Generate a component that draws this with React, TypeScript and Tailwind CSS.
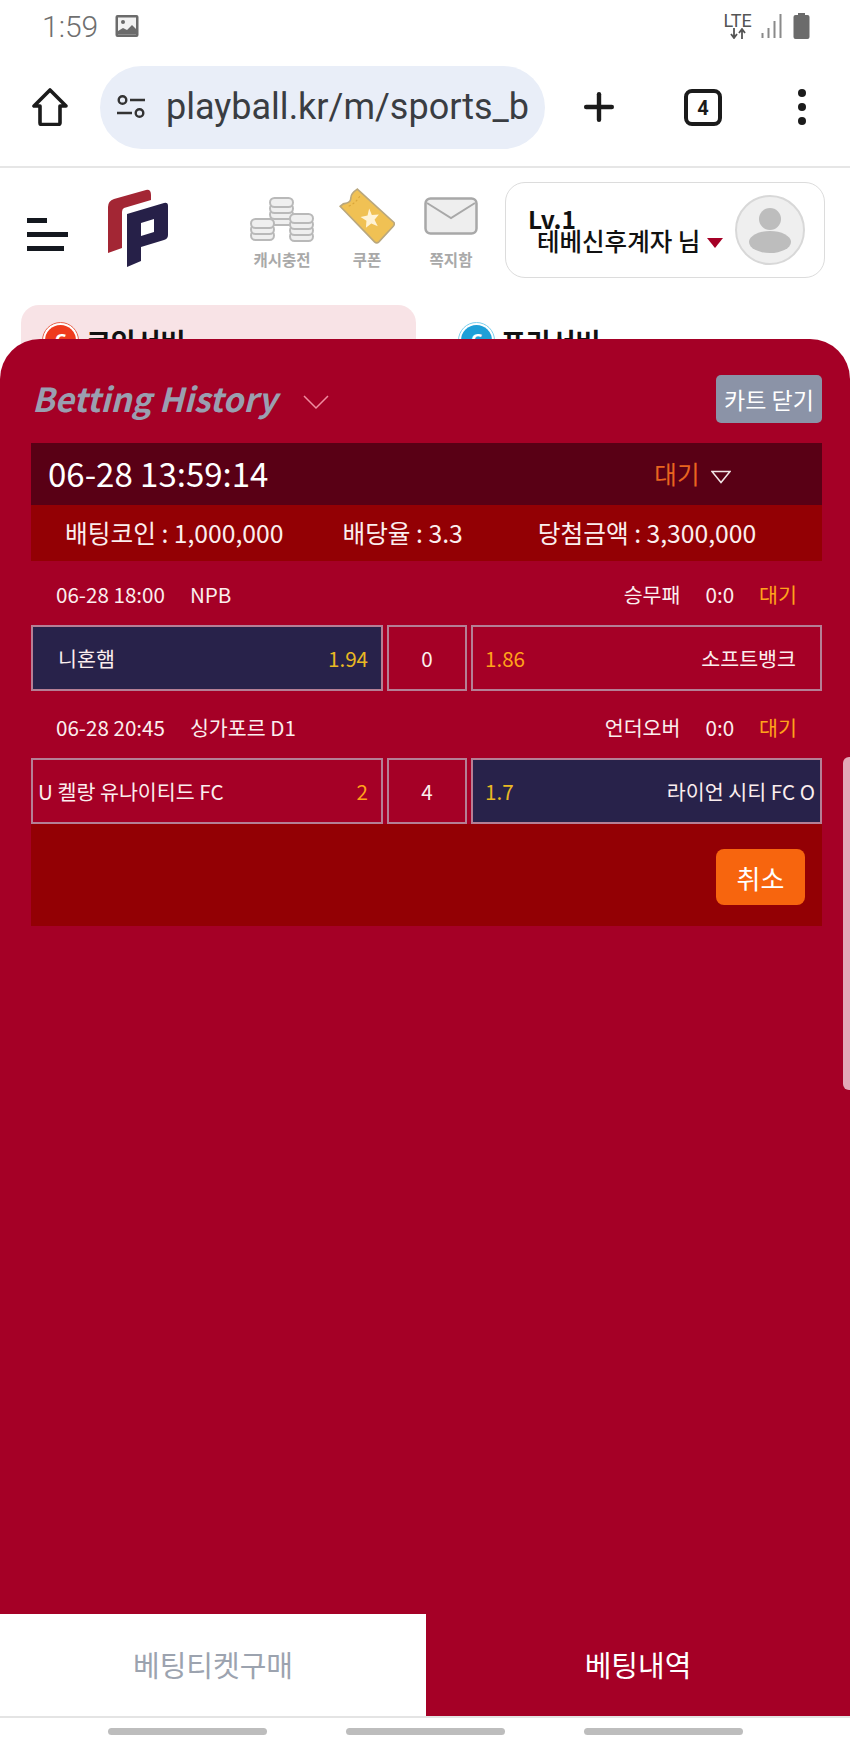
import { Plus } from "lucide-react";

const KR = "font-['Noto_Sans_CJK_KR','Noto_Sans',sans-serif]";

function StatusBar() {
  return (
    <div className="flex h-[52px] items-center justify-between pl-[42px] pr-[40px]">
      <div className="flex items-center gap-[17px]">
        <span className="font-['Roboto',sans-serif] text-[30px] font-light text-[#6f6f6f]">1:59</span>
        <svg width="24" height="24" viewBox="0 0 24 24">
          <rect x="0.5" y="1" width="23" height="22" rx="2" fill="#6b6b6b" />
          <rect x="3" y="3.5" width="18" height="17" fill="#f2f2f2" />
          <circle cx="8" cy="8" r="2" fill="#6b6b6b" />
          <path d="M3 20.5V17l5-3 4 2 5-5 4 4v5.5z" fill="#6b6b6b" />
        </svg>
      </div>
      <div className="flex items-center">
        <div className="flex w-[31px] flex-col items-center font-['Roboto',sans-serif] text-[18px] leading-[15px] text-[#555]">
          <span>LTE</span>
          <svg width="18" height="11" viewBox="0 0 18 11">
            <path d="M5 0v9M2 6l3 4 3-4M13 11V2M10 5l3-4 3 4" stroke="#555" strokeWidth="1.800" fill="none" />
          </svg>
        </div>
        <svg width="22" height="24" viewBox="0 0 22 24" className="ml-[8px]">
          <path d="M1.500 24v-5M7.500 24v-10M13.500 24V7M19.500 24V0" stroke="#8a8a8a" strokeWidth="2" />
        </svg>
        <svg width="17" height="26" viewBox="0 0 17 26" className="ml-[10px]">
          <path d="M5 2V0h7v2h2.500A2 2 0 0 1 16.500 4v20a2 2 0 0 1-2 2h-12a2 2 0 0 1-2-2V4a2 2 0 0 1 2-2z" fill="#6b6b6b" />
        </svg>
      </div>
    </div>
  );
}

function Toolbar() {
  return (
    <div className="flex h-[116px] items-center border-b-2 border-[#e6e6e6] pb-[4px]">
      <svg width="36" height="38" viewBox="0 0 36 38" className="ml-[32px] mr-[32px] shrink-0">
        <path d="M18 2 2 18h6v17a1.500 1.500 0 0 0 1.500 1.500h17A1.500 1.500 0 0 0 28 35V18h6z" fill="none" stroke="#1b1b1b" strokeWidth="3.600" strokeLinejoin="round" />
      </svg>
      <div className="flex h-[83px] w-[445px] shrink-0 items-center overflow-hidden rounded-[42px] bg-[#e9eef8] pl-[16px]">
        <svg width="32" height="26" viewBox="0 0 32 26" className="mr-[18px] shrink-0">
          <circle cx="6.500" cy="6" r="3.800" fill="none" stroke="#333" strokeWidth="2.400" />
          <path d="M14 6h15M1 19h15" stroke="#333" strokeWidth="2.600" />
          <circle cx="23.500" cy="19" r="3.800" fill="none" stroke="#333" strokeWidth="2.400" />
        </svg>
        <span className="whitespace-nowrap font-['Roboto',sans-serif] text-[36px] text-[#3a3d42]">playball.kr/m/sports_b</span>
      </div>
      <Plus size={44} strokeWidth={2.400} className="ml-[32px] text-[#1b1b1b]" />
      <div className="ml-[63px] mt-[1px] flex h-[37px] w-[38px] items-center justify-center rounded-[8px] border-4 border-[#1b1b1b] font-['Roboto',sans-serif] text-[20px] font-bold text-[#1b1b1b]">
        4
      </div>
      <div className="ml-[76px] flex flex-col gap-[6px]">
        <span className="h-[8px] w-[8px] rounded-full bg-[#1b1b1b]" />
        <span className="h-[8px] w-[8px] rounded-full bg-[#1b1b1b]" />
        <span className="h-[8px] w-[8px] rounded-full bg-[#1b1b1b]" />
      </div>
    </div>
  );
}

function Logo() {
  return (
    <svg width="62" height="80" viewBox="0 0 62 80" className="shrink-0">
      <path d="M1 18 Q1 12 7 10 L39 1 Q44 0 44 6 L44 11 L17 19 Q15 20 15 23 L15 59 L1 64 Z" fill="#a32634" />
      <path d="M20 25 L57 14 Q61 13 61 17 L61 46 Q61 50 57 51 L34 58 L34 72 L20 78 Z M34 34 L34 47 L47 43 L47 30 Z" fill="#262048" fillRule="evenodd" />
    </svg>
  );
}

function CoinStack({ x, y, n }: { x: number; y: number; n: number }) {
  return (
    <g fill="#efefef" stroke="#b9b9b9" strokeWidth="2">
      {Array.from({ length: n }).map((_, i) => (
        <rect key={i} x={x} y={y + (n - 1 - i) * 6} width="23" height="9" rx="4.500" />
      ))}
    </g>
  );
}

function TopIcon({ label, children, className }: { label: string; children: React.ReactNode; className: string }) {
  return (
    <div className={`flex flex-col items-center ${className}`}>
      <div className="flex h-[56px] items-center">{children}</div>
      <span className={`${KR} mt-[2px] whitespace-nowrap text-[15.500px] font-bold leading-[18px] text-[#a9a9a9]`}>{label}</span>
    </div>
  );
}

function SiteHeader() {
  return (
    <div className="flex h-[114px] items-start">
      <div className="ml-[27px] mt-[50px] flex w-[41px] flex-col">
        <span className="h-[5px] w-[20px] bg-[#14181f]" />
        <span className="mt-[9px] h-[5px] w-[41px] bg-[#14181f]" />
        <span className="mt-[9px] h-[5px] w-[37px] bg-[#14181f]" />
      </div>
      <div className="ml-[39px] mt-[21px]">
        <Logo />
      </div>
      <TopIcon label="캐시충전" className="ml-[79px] mt-[24px] w-[68px]">
        <svg width="64" height="46" viewBox="0 0 64 46">
          <CoinStack x={20} y={1} n={4} />
          <CoinStack x={1} y={22} n={3} />
          <CoinStack x={40} y={17} n={4} />
        </svg>
      </TopIcon>
      <TopIcon label="쿠폰" className="ml-[24px] mt-[24px] w-[54px]">
        <svg width="56" height="56" viewBox="0 0 52 52" className="mt-[-8px]">
          <path d="M17 1 L51 32 Q52 34 50 36 L37 50 Q35 52 33 50 L1 17 Q4 14 7 14 Q11 13 11 9 Q11 5 17 1 Z" fill="#f0c154" stroke="#b9a77d" strokeWidth="1.500" />
          <path d="M9 17 Q17 13 20 6" fill="none" stroke="#d9a63a" strokeWidth="1" strokeDasharray="2 2" />
          <path d="m28 19 2.500 6 6.500-.5-4 5 3 6-6-2.500-5 4 .5-6.500-5.500-3.500 6.500-1.500z" fill="#fff3d6" />
        </svg>
      </TopIcon>
      <TopIcon label="쪽지함" className="ml-[29px] mt-[24px] w-[56px]">
        <svg width="54" height="38" viewBox="0 0 54 38" className="mt-[-8px]">
          <rect x="1.500" y="1.500" width="51" height="35" rx="5" fill="#eeeeee" stroke="#a8a8a8" strokeWidth="2.500" />
          <path d="M3 6 27 21 51 6" fill="none" stroke="#a8a8a8" strokeWidth="2" />
        </svg>
      </TopIcon>
      <div className="ml-[26px] mt-[14px] flex h-[96px] w-[320px] items-center rounded-[20px] border border-[#dcdcdc] pl-[22px] pr-[21px]">
        <div className={`${KR} w-[207px] shrink-0 text-[24.500px] font-medium leading-[22px] text-[#111]`}>
          <div className="font-bold">Lv.1</div>
          <div className="flex items-center whitespace-nowrap pl-[9px]">
            테베신후계자 님
            <span className="ml-[7px] mt-[3px] h-0 w-0 border-x-[8px] border-t-[10px] border-x-transparent border-t-[#a50026]" />
          </div>
        </div>
        <div className="flex h-[70px] w-[70px] shrink-0 items-center justify-center rounded-full border-2 border-[#d8d8d8] bg-[#efefef]">
          <svg width="46" height="46" viewBox="0 0 46 46">
            <circle cx="23" cy="12" r="11" fill="#bdbdbd" />
            <ellipse cx="23" cy="35" rx="21" ry="11" fill="#bdbdbd" />
          </svg>
        </div>
      </div>
    </div>
  );
}

function ServerBadge({ ring, fill }: { ring: string; fill: string }) {
  return (
    <span className={`flex h-[37px] w-[37px] items-center justify-center rounded-full border ${ring} bg-white`}>
      <span className={`flex h-[31px] w-[31px] items-center justify-center rounded-full ${fill} text-[18px] font-bold text-white`}>C</span>
    </span>
  );
}

function ServerTabs() {
  return (
    <div className="mt-[23px] flex h-[74px] overflow-hidden pl-[21px]">
      <div className="flex h-[74px] w-[395px] gap-[7px] rounded-t-[18px] bg-[#f8e3e6] pl-[21px] pt-[17px]">
        <ServerBadge ring="border-[#e8634d]" fill="bg-[#ef3a1d]" />
        <span className={`${KR} text-[27px] font-bold leading-[40px] text-[#111]`}>코인서버</span>
      </div>
      <div className="ml-[20px] flex h-[74px] w-[395px] gap-[6px] pl-[22px] pt-[17px]">
        <ServerBadge ring="border-[#7fd0ee]" fill="bg-[#1e9fd8]" />
        <span className={`${KR} text-[27px] font-bold leading-[40px] text-[#111]`}>프리서버</span>
      </div>
    </div>
  );
}

function SummaryBar() {
  return (
    <div className="ml-[31px] w-[791px]">
      <div className="flex h-[62px] items-center bg-[#590015] pl-[17px]">
        <span className="text-[33px] text-white">06-28 13:59:14</span>
        <span className="ml-[386px] text-[24.500px] text-[#e8651f]">대기</span>
        <svg width="20" height="14" viewBox="0 0 20 14" className="ml-[12px] mt-[5px]">
          <path d="M1 1.500h18L10 12.500z" fill="none" stroke="#f1e4e6" strokeWidth="1.500" />
        </svg>
      </div>
      <div className="flex h-[56px] items-center bg-[#930004] pl-[34px] text-[24.700px] text-[#fbeeee]">
        <span>배팅코인 : 1,000,000</span>
        <span className="ml-[59px]">배당율 : 3.3</span>
        <span className="ml-[75px]">당첨금액 : 3,300,000</span>
      </div>
    </div>
  );
}

type Side = { name: string; odds: string; picked?: boolean };

function BetRow({
  time,
  league,
  market,
  home,
  draw,
  away,
  homeClass,
  awayClass,
  gap,
}: {
  time: string;
  league: string;
  market: string;
  home: Side;
  draw: string;
  away: Side;
  homeClass: string;
  awayClass: string;
  gap: string;
}) {
  const box = "flex h-[66px] items-center border-2 border-[#b57f95]";
  return (
    <div className={gap}>
      <div className="flex h-[64px] items-center pl-[56px] pr-[53px] pt-[2px] text-[20.600px] text-[#fbeeee]">
        <span>{time}</span>
        <span className="ml-[25px]">{league}</span>
        <span className="ml-auto">{market}</span>
        <span className="ml-[25px]">0:0</span>
        <span className="ml-[25px] text-[#ffa31a]">대기</span>
      </div>
      <div className="ml-[31px] flex w-[791px] gap-[4px] text-[20.600px] text-[#fbeeee]">
        <div className={`${box} w-[352px] justify-between pr-[13px] ${homeClass} ${home.picked ? "bg-[#28224a]" : ""}`}>
          <span className="whitespace-nowrap">{home.name}</span>
          <span className={home.picked ? "text-[#e8b923]" : "text-[#ffa31a]"}>{home.odds}</span>
        </div>
        <div className={`${box} w-[80px] justify-center`}>{draw}</div>
        <div className={`${box} w-[351px] justify-between pl-[12px] ${awayClass} ${away.picked ? "bg-[#28224a]" : ""}`}>
          <span className={away.picked ? "text-[#e8b923]" : "text-[#ffa31a]"}>{away.odds}</span>
          <span className="whitespace-nowrap">{away.name}</span>
        </div>
      </div>
    </div>
  );
}

function BottomTabs() {
  return (
    <div className={`${KR} flex h-[104px] border-b-2 border-[#e4e4e4] text-[29px]`}>
      <div className="flex w-[426px] items-center justify-center bg-white text-[#9ca3af]">베팅티켓구매</div>
      <div className="flex w-[424px] items-center justify-center bg-[#a50026] text-white">베팅내역</div>
    </div>
  );
}

export default function App() {
  return (
    <div className="flex h-[1748px] w-[850px] flex-col overflow-hidden bg-white">
      <StatusBar />
      <Toolbar />
      <SiteHeader />
      <ServerTabs />
      {/* betting panel slides over the page */}
      <div className={`${KR} relative z-10 mt-[-40px] flex-1 rounded-t-[40px] bg-[#a50026]`}>
        <div className="flex h-[104px] items-center justify-between pl-[32px] pr-[28px] pt-[16px]">
          <div className="flex items-center">
            <span className="text-[33px] font-bold italic text-[#9a9fb0]">Betting History</span>
            <svg width="26" height="15" viewBox="0 0 26 15" className="ml-[26px] mt-[6px]">
              <path d="M1 1l12 12L25 1" fill="none" stroke="#f08ca0" strokeWidth="1.500" />
            </svg>
          </div>
          <button className="flex h-[48px] w-[106px] items-center justify-center rounded-[5px] bg-[#8b93a7] text-[23px] text-white">
            카트 닫기
          </button>
        </div>
        <SummaryBar />
        <BetRow
          time="06-28 18:00"
          league="NPB"
          market="승무패"
          home={{ name: "니혼햄", odds: "1.94", picked: true }}
          draw="0"
          away={{ name: "소프트뱅크", odds: "1.86" }}
          homeClass="pl-[25px]"
          awayClass="pr-[24px]"
          gap="mb-[3px]"
        />
        <BetRow
          time="06-28 20:45"
          league="싱가포르 D1"
          market="언더오버"
          home={{ name: "U 켈랑 유나이티드 FC", odds: "2" }}
          draw="4"
          away={{ name: "라이언 시티 FC O", odds: "1.7", picked: true }}
          homeClass="pl-[5px]"
          awayClass="pr-[5px]"
          gap=""
        />
        <div className="ml-[31px] flex h-[102px] w-[791px] items-start justify-end bg-[#930004] pr-[17px] pt-[25px]">
          <button className="flex h-[56px] w-[89px] items-center justify-center rounded-[8px] bg-[#f7650e] text-[26px] text-white">
            취소
          </button>
        </div>
        {/* page scrollbar */}
        <div className="absolute right-0 top-[418px] h-[333px] w-[7px] rounded-l-[6px] bg-[#e3a9b8]" />
      </div>
      <BottomTabs />
      <div className="flex h-[30px] items-start justify-center gap-[79px] pt-[10px]">
        <span className="h-[7px] w-[159px] rounded-full bg-[#bdbdbd]" />
        <span className="h-[7px] w-[159px] rounded-full bg-[#bdbdbd]" />
        <span className="h-[7px] w-[159px] rounded-full bg-[#bdbdbd]" />
      </div>
    </div>
  );
}
